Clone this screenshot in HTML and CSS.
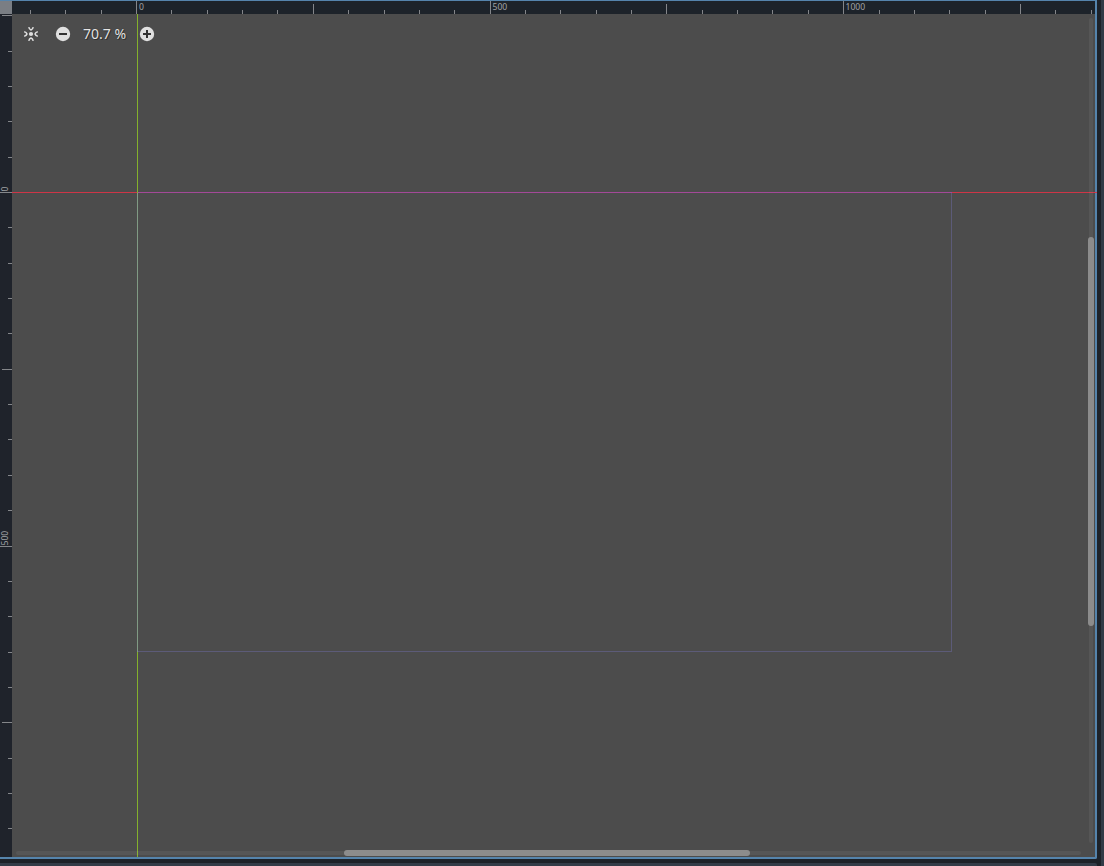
FILE: index.html
```html
<!DOCTYPE html>
<html lang="en">
<head>
<meta charset="utf-8">
<title>2D Editor</title>
<link rel="stylesheet" href="styles.css">
</head>
<body>
<div class="app">
  <main class="editor">
    <div class="corner"></div>
    <div class="ruler ruler-top">
      <svg width="1083" height="13" viewBox="12 1 1083 13" shape-rendering="crispEdges">
        <path class="tick" d="M30.5 10v4M65.5 10v4M101.5 10v4M136.5 1v13M171.5 10v4M207.5 10v4M242.5 10v4M277.5 10v4M313.5 4v10M348.5 10v4M384.5 10v4M419.5 10v4M454.5 10v4M490.5 1v13M525.5 10v4M560.5 10v4M596.5 10v4M631.5 10v4M666.5 4v10M702.5 10v4M737.5 10v4M772.5 10v4M808.5 10v4M843.5 1v13M879.5 10v4M914.5 10v4M949.5 10v4M985.5 10v4M1020.5 4v10M1055.5 10v4M1091.5 10v4"/>
        <text class="mark" x="139" y="10">0</text>
        <text class="mark" x="492.5" y="10">500</text>
        <text class="mark" x="845.5" y="10">1000</text>
      </svg>
    </div>
    <div class="ruler ruler-left">
      <svg width="12" height="843" viewBox="0 14 12 843" shape-rendering="crispEdges">
        <path class="tick" d="M2 15.5h10M8 51.5h4M8 86.5h4M8 121.5h4M8 157.5h4M0 192.5h12M8 227.5h4M8 263.5h4M8 298.5h4M8 333.5h4M2 369.5h10M8 404.5h4M8 439.5h4M8 475.5h4M8 510.5h4M0 546.5h12M8 581.5h4M8 616.5h4M8 652.5h4M8 687.5h4M2 722.5h10M8 758.5h4M8 793.5h4M8 828.5h4"/>
        <text class="mark" transform="translate(8 191.5) rotate(-90)">0</text>
        <text class="mark" transform="translate(8 545.5) rotate(-90)">500</text>
      </svg>
    </div>
    <section class="canvas">
      <svg class="guides" width="1085" height="843" viewBox="12 14 1085 843" shape-rendering="crispEdges">
        <path class="frame" d="M951.5 193V652M138 651.5H951"/>
        <path class="axis-x" d="M12 192.5H137M952 192.5H1097"/>
        <path class="axis-x-frame" d="M138 192.5H952"/>
        <path class="axis-y" d="M137.5 14V193M137.5 652V857"/>
        <path class="axis-y-frame" d="M137.5 193V652"/>
      </svg>
      <div class="zoom-bar">
        <svg class="icon" width="16" height="16" viewBox="0 0 16 16">
          <circle cx="8" cy="8" r="2.1" fill="#e0e0e0"/>
          <path d="M5.8 1.2Q6.2 3.4 8 4Q9.8 3.4 10.2 1.2M5.8 14.8Q6.2 12.6 8 12Q9.8 12.6 10.2 14.8M1.2 5.8Q3.4 6.2 4 8Q3.4 9.8 1.2 10.2M14.8 5.8Q12.6 6.2 12 8Q12.6 9.8 14.8 10.2" fill="none" stroke="#e0e0e0" stroke-width="1.5"/>
        </svg>
        <svg class="icon" width="16" height="16" viewBox="0 0 16 16">
          <circle cx="8" cy="8" r="7.2" fill="#e0e0e0"/>
          <path d="M4 8h8" stroke="#333" stroke-width="2"/>
        </svg>
        <span class="zoom-value">70.7 %</span>
        <svg class="icon" width="16" height="16" viewBox="0 0 16 16">
          <circle cx="8" cy="8" r="7.2" fill="#e0e0e0"/>
          <path d="M4 8h8M8 4v8" stroke="#333" stroke-width="2"/>
        </svg>
      </div>
      <div class="scroll scroll-v"><div class="thumb"></div></div>
      <div class="scroll scroll-h"><div class="thumb"></div></div>
    </section>
  </main>
  <aside class="side-dock"></aside>
  <footer class="bottom-dock"></footer>
</div>
</body>
</html>
```
FILE: styles.css
```css
* {
  box-sizing: border-box;
}

body {
  margin: 0;
  overflow: hidden;
  font-family: "Noto Sans", sans-serif;
}

.app {
  display: grid;
  grid-template-columns: 1097px 3px;
  grid-template-rows: 859px 3px;
  column-gap: 4px;
  row-gap: 4px;
  width: 1104px;
  height: 866px;
  background: #1d2229;
}

.editor {
  display: grid;
  grid-template-columns: 12px 1083px;
  grid-template-rows: 13px 843px;
  border: solid #5584ac;
  border-width: 1px 2px 2px 0;
  border-bottom-right-radius: 2px;
}

.corner {
  background: #7a7e84;
}

.ruler {
  background: #1d232a;
}

.ruler-left {
  background: #1f232b;
}

svg {
  display: block;
}

.tick {
  stroke: #84868a;
  stroke-width: 1;
}

.mark {
  fill: #a0a2a5;
  font-size: 8.6px;
}

.canvas {
  position: relative;
  background: #4c4c4c;
}

.guides {
  position: absolute;
  inset: 0 auto auto 0;
}

.frame {
  fill: none;
  stroke: #5c5b78;
}

.axis-x {
  stroke: #ce3547;
}

.axis-x-frame {
  stroke: #a34998;
}

.axis-y {
  stroke: #84b02c;
}

.axis-y-frame {
  stroke: #809a84;
}

.zoom-bar {
  position: relative;
  display: flex;
  align-items: center;
  height: 40px;
  padding-left: 11px;
}

.icon + .icon {
  margin-left: 16px;
}

.zoom-value {
  width: 68px;
  padding-right: 1px;
  color: #e4e4e4;
  font-size: 14px;
  line-height: 20px;
  text-align: center;
  text-shadow: 0 0 1px #222, 1px 1px 0 #333;
}

.scroll {
  position: absolute;
  display: flex;
  background: rgb(255 255 255 / 6%);
  border-radius: 2px;
}

.scroll-v {
  top: 4px;
  right: 2px;
  width: 4px;
  height: 825px;
  padding-top: 219px;
}

.scroll-h {
  bottom: 2px;
  left: 4px;
  width: 1065px;
  height: 4px;
  padding-left: 328px;
}

.thumb {
  flex: none;
  background: #8c8c8c;
  border-radius: 3px;
}

.scroll-v .thumb {
  width: 6px;
  height: 389px;
  margin-left: -1px;
}

.scroll-h .thumb {
  width: 406px;
  height: 6px;
  margin-top: -1px;
}

.side-dock {
  grid-row: 1 / -1;
  grid-column: 2;
  background: #303a46;
}

.bottom-dock {
  background: #333c48;
  border-top-right-radius: 2px;
}
```
